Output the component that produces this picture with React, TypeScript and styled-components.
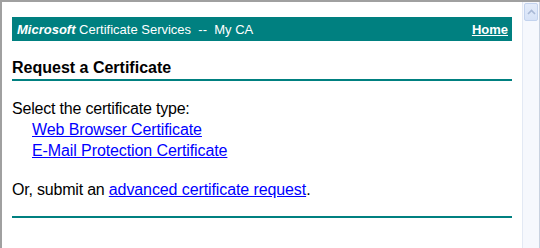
import styled, { createGlobalStyle } from "styled-components";

const GlobalStyle = createGlobalStyle`
  html, body {
    margin: 0;
    padding: 0;
    background: #ffffff;
  }
  body {
    font-family: "Liberation Sans", Arial, sans-serif;
  }
`;

const Frame = styled.div`
  width: 540px;
  height: 248px;
  box-sizing: border-box;
  display: flex;
  border-top: 2px solid #a0a0a0;
  border-left: 2px solid #a0a0a0;
  overflow: hidden;
`;

const Viewport = styled.div`
  flex: 1;
  padding: 15px 10px 0 10px;
  background: #ffffff;
`;

const Scrollbar = styled.div`
  width: 18px;
  flex-shrink: 0;
  background: #f6f8fd;
  border-left: 1px solid #e3e9f4;
  border-right: 1px solid #c9d2e0;
  padding: 1px 1px 0 1px;
  box-sizing: border-box;
`;

const ArrowButton = styled.div`
  height: 16px;
  border: 1px solid #c3d3ee;
  border-radius: 2px;
  background: linear-gradient(#e4ecfa, #d6e2f7);
  display: flex;
  align-items: center;
  justify-content: center;
`;

const HeaderBar = styled.div`
  height: 24px;
  background: #008080;
  color: #ffffff;
  font-size: 13px;
  display: flex;
  align-items: center;
  justify-content: space-between;
  padding: 0 4px 0 5px;
`;

const Brand = styled.span`
  white-space: pre;
  em {
    font-weight: bold;
    font-style: italic;
  }
`;

const HomeLink = styled.a`
  color: #ffffff;
  font-weight: bold;
  text-decoration: underline;
`;

const Title = styled.h1`
  margin: 18px 0 0 0;
  padding-bottom: 2px;
  font-size: 16px;
  line-height: 18px;
  font-weight: bold;
  color: #000000;
  border-bottom: 2px solid #008080;
`;

const Block = styled.div<{ $gap: number }>`
  margin-top: ${(p) => p.$gap}px;
  font-size: 16px;
  line-height: 21px;
  letter-spacing: -0.2px;
  color: #000000;
`;

const Line = styled.div<{ $indent?: boolean }>`
  padding-left: ${(p) => (p.$indent ? "20px" : "0")};
`;

const Link = styled.a`
  color: #0000ff;
  letter-spacing: -0.1px;
  text-decoration: underline;
`;

const Rule = styled.div`
  margin-top: 16px;
  height: 2px;
  background: #008080;
`;

export default function App() {
  return (
    <>
      <GlobalStyle />
      <Frame>
        <Viewport>
          <HeaderBar>
            <Brand>
              <em>Microsoft</em> Certificate Services  --  My CA
            </Brand>
            <HomeLink href="#">Home</HomeLink>
          </HeaderBar>
          <Title>Request a Certificate</Title>
          <Block $gap={17}>
            <Line>Select the certificate type:</Line>
            <Line $indent>
              <Link href="#">Web Browser Certificate</Link>
            </Line>
            <Line $indent>
              <Link href="#">E-Mail Protection Certificate</Link>
            </Line>
          </Block>
          <Block $gap={18}>
            <Line>
              Or, submit an <Link href="#">advanced certificate request</Link>.
            </Line>
          </Block>
          <Rule />
        </Viewport>
        <Scrollbar>
          <ArrowButton>
            <svg width="9" height="6" viewBox="0 0 9 6">
              <path d="M1 5 L4.5 1.5 L8 5" fill="none" stroke="#a9b9d6" strokeWidth="1.6" />
            </svg>
          </ArrowButton>
        </Scrollbar>
      </Frame>
    </>
  );
}
